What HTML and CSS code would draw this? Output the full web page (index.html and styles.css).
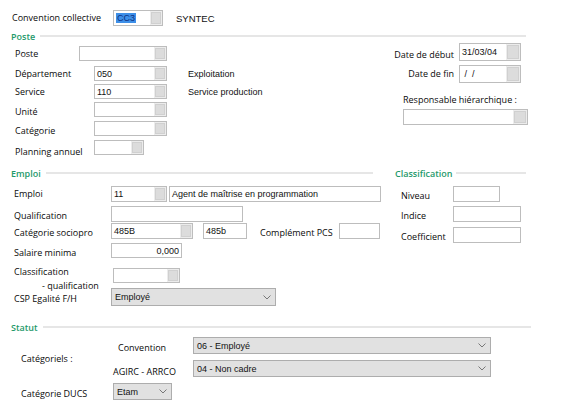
FILE: index.html
```html
<!DOCTYPE html>
<html lang="fr">
<head>
<meta charset="utf-8">
<title>Fiche salarié</title>
<link rel="stylesheet" href="styles.css">
</head>
<body>
<div class="page">

  <div class="row top-row">
    <span class="lbl top-lbl">Convention collective</span>
    <div class="field w-cc"><span class="v"><span class="hl">CC3</span></span><span class="btn"></span></div>
    <span class="val top-val">SYNTEC</span>
  </div>

  <div class="sec-head head-poste"><span class="sec-title">Poste</span><span class="sec-line"></span></div>

  <div class="poste">
    <div class="poste-left">
      <div class="row r-poste"><span class="lbl l-poste">Poste</span><div class="field w-poste"><span class="v"></span><span class="btn"></span></div></div>
      <div class="row r-dept"><span class="lbl l-std">Département</span><div class="field w-std"><span class="v">050</span><span class="btn"></span></div><span class="val desc">Exploitation</span></div>
      <div class="row r-serv"><span class="lbl l-std">Service</span><div class="field w-std"><span class="v">110</span><span class="btn"></span></div><span class="val desc">Service production</span></div>
      <div class="row r-unit"><span class="lbl l-std low">Unité</span><div class="field w-std"><span class="v"></span><span class="btn"></span></div></div>
      <div class="row r-cat"><span class="lbl l-std low">Catégorie</span><div class="field w-std"><span class="v"></span><span class="btn"></span></div></div>
      <div class="row r-plan"><span class="lbl l-std lower">Planning annuel</span><div class="field w-plan"><span class="v"></span><span class="btn"></span></div></div>
    </div>
    <div class="poste-right">
      <div class="row date-row d-debut"><span class="lbl mid">Date de début</span><div class="field w-date"><span class="v">31/03/04</span><span class="btn"></span></div></div>
      <div class="row date-row d-fin"><span class="lbl">Date de fin</span><div class="field w-date"><span class="v">&nbsp;/&nbsp;&nbsp;/</span><span class="btn"></span></div></div>
      <div class="lbl resp-lbl">Responsable hiérarchique :</div>
      <div class="field w-resp"><span class="v"></span><span class="btn"></span></div>
    </div>
  </div>

  <div class="emploi">
    <div class="emploi-left">
      <div class="sec-head head-emploi"><span class="sec-title">Emploi</span><span class="sec-line"></span></div>
      <div class="row e-emploi"><span class="lbl l-emp">Emploi</span><div class="field w-emp"><span class="v">11</span><span class="btn"></span></div><div class="field w-lib"><span class="v">Agent de maîtrise en programmation</span></div></div>
      <div class="row e-qual"><span class="lbl l-emp low">Qualification</span><div class="field w-qual"><span class="v"></span></div></div>
      <div class="row e-csp"><span class="lbl l-emp low">Catégorie sociopro</span><div class="field w-csp"><span class="v">485B</span><span class="btn"></span></div><div class="field w-pcs"><span class="v">485b</span></div><span class="lbl l-pcs low">Complément PCS</span><div class="field w-comp"><span class="v"></span></div></div>
      <div class="row e-sal"><span class="lbl l-emp low">Salaire minima</span><div class="field w-sal"><span class="v v-right">0,000</span></div></div>
      <div class="row e-cq"><span class="lbl l-cq low">Classification<br><span class="cq-sub">- qualification</span></span><div class="field w-cq"><span class="v"></span><span class="btn"></span></div></div>
      <div class="row e-egal"><span class="lbl l-emp low">CSP Egalité F/H</span><div class="select w-egal"><span class="s-text">Employé</span><svg class="chev" width="8" height="5" viewBox="0 0 8 5"><path d="M0.5 0.5 L4 4 L7.5 0.5" fill="none" stroke="#777" stroke-width="1"/></svg></div></div>
    </div>
    <div class="emploi-right">
      <div class="sec-head head-class"><span class="sec-title">Classification</span><span class="sec-line"></span></div>
      <div class="row c-niv"><span class="lbl l-cls low">Niveau</span><div class="field w-niv"><span class="v"></span></div></div>
      <div class="row c-ind"><span class="lbl l-cls low">Indice</span><div class="field w-ind"><span class="v"></span></div></div>
      <div class="row c-coef"><span class="lbl l-cls low">Coefficient</span><div class="field w-ind"><span class="v"></span></div></div>
    </div>
  </div>

  <div class="sec-head head-statut"><span class="sec-title">Statut</span><span class="sec-line"></span></div>

  <div class="statut">
    <span class="lbl st-cat low">Catégoriels :</span>
    <span class="lbl st-conv low">Convention</span>
    <div class="select st-sel1"><span class="s-text">06 - Employé</span><svg class="chev" width="8" height="5" viewBox="0 0 8 5"><path d="M0.5 0.5 L4 4 L7.5 0.5" fill="none" stroke="#777" stroke-width="1"/></svg></div>
    <span class="lbl st-agirc mid">AGIRC - ARRCO</span>
    <div class="select st-sel2"><span class="s-text">04 - Non cadre</span><svg class="chev" width="8" height="5" viewBox="0 0 8 5"><path d="M0.5 0.5 L4 4 L7.5 0.5" fill="none" stroke="#777" stroke-width="1"/></svg></div>
    <span class="lbl st-ducs low">Catégorie DUCS</span>
    <div class="select st-sel3"><span class="s-text">Etam</span><svg class="chev" width="8" height="5" viewBox="0 0 8 5"><path d="M0.5 0.5 L4 4 L7.5 0.5" fill="none" stroke="#777" stroke-width="1"/></svg></div>
  </div>

</div>
</body>
</html>
```

FILE: styles.css
```css
html, body {
  margin: 0;
  padding: 0;
  background: #ffffff;
}

body {
  font-family: "Open Sans", "Noto Sans", sans-serif;
  font-size: 9px;
  color: #0a0a0a;
}

.page {
  width: 576px;
  height: 411px;
  overflow: hidden;
  box-sizing: border-box;
  padding-top: 10px;
}

.row {
  display: flex;
  align-items: center;
}

.lbl {
  font-family: "Open Sans", "Noto Sans", sans-serif;
  font-size: 9px;
  line-height: 12px;
  white-space: nowrap;
  color: #0a0a0a;
}

/* baseline nudges that do not change the row height */
.low { margin-top: 2px; margin-bottom: -2px; }
.mid { margin-top: 3px; margin-bottom: -3px; }
.lower { margin-top: 4px; margin-bottom: -4px; }

.val {
  font-family: "Liberation Sans", Arial, sans-serif;
  font-size: 9px;
  color: #111111;
  white-space: nowrap;
}

/* input fields */
.field {
  display: flex;
  box-sizing: border-box;
  height: 16px;
  border: 1px solid #bdbdbd;
  background: #ffffff;
  flex: none;
}

.field .v {
  flex: 1;
  min-width: 0;
  font-family: "Liberation Sans", Arial, sans-serif;
  font-size: 9px;
  line-height: 14px;
  color: #111111;
  padding-left: 2px;
  white-space: nowrap;
  overflow: hidden;
}

.field .v-right {
  text-align: right;
  padding-left: 0;
  padding-right: 2px;
}

.field .btn {
  width: 12px;
  flex: none;
  box-sizing: border-box;
  background: #dcdcdc;
  border: 1px solid #ececec;
  box-shadow: inset 0 0 0 1px #d0d0d0;
}

.hl {
  background: #3d8fe8;
  color: #0d2f80;
  padding: 0 1px;
}

/* selects */
.select {
  display: flex;
  align-items: center;
  box-sizing: border-box;
  height: 17px;
  border: 1px solid #adadad;
  background: #e1e1e1;
  padding: 0 4px 0 3px;
}

.select .s-text {
  flex: 1;
  font-family: "Liberation Sans", Arial, sans-serif;
  font-size: 9px;
  color: #111111;
  white-space: nowrap;
}

.chev {
  flex: none;
  display: block;
}

/* section heads */
.sec-head {
  display: flex;
  align-items: center;
  height: 12px;
}

.sec-title {
  font-family: "Open Sans", "Noto Sans", sans-serif;
  font-size: 9px;
  font-weight: 600;
  line-height: 12px;
  color: #1f9a6b;
  white-space: nowrap;
}

.sec-line {
  flex: 1;
  height: 2px;
  background: #e6e6e6;
  margin-left: 5px;
  margin-top: -2px;
}

/* top row */
.top-row {
  height: 16px;
}

.top-lbl {
  width: 101px;
  padding-left: 12px;
  flex: none;
}

.w-cc { width: 50px; }

.top-val {
  margin-left: 13px;
  font-size: 9.5px;
}

.head-poste {
  margin-top: 5px;
  padding-left: 11px;
  width: 515px;
}

/* poste */
.poste {
  display: flex;
}

.poste-left {
  width: 392px;
  padding-left: 15px;
  box-sizing: border-box;
}

.l-poste { width: 64px; flex: none; }
.l-std { width: 79px; flex: none; }

.w-poste { width: 88px; height: 15px; }
.w-std { width: 73px; height: 15px; }
.w-plan { width: 50px; height: 15px; }

.desc { margin-left: 21px; }

.r-poste { margin-top: 3px; }
.r-dept { margin-top: 5px; }
.r-serv { margin-top: 3px; }
.r-unit { margin-top: 3px; }
.r-cat { margin-top: 4px; }
.r-plan { margin-top: 4px; }

.poste-right {
  width: 136px;
  display: flex;
  flex-direction: column;
}

.date-row {
  justify-content: flex-end;
  padding-right: 7px;
}

.date-row .lbl { margin-right: 5px; }

.w-date { width: 62px; height: 18px; }
.w-date .v { line-height: 16px; }
.w-date .btn { width: 14px; }

.d-debut { margin-top: 0; }
.d-fin { margin-top: 4px; }

.resp-lbl {
  margin-top: 11px;
  padding-left: 11px;
}

.w-resp {
  margin-top: 3px;
  margin-left: 11px;
  width: 125px;
}

.w-resp .btn { width: 14px; }

/* emploi */
.emploi {
  display: flex;
  margin-top: 13px;
}

.emploi-left {
  width: 383px;
  flex: none;
}

.head-emploi {
  padding-left: 11px;
  margin-right: 10px;
}

.emploi-left .row {
  padding-left: 14px;
}

.l-emp { width: 97px; flex: none; }

.e-emploi { margin-top: 6px; }
.e-qual { margin-top: 4px; }
.e-csp { margin-top: 1px; }
.e-sal { margin-top: 4px; }

.w-emp { width: 56px; }
.w-lib { width: 212px; margin-left: 2px; }
.w-qual { width: 132px; }
.w-csp { width: 82px; }
.w-pcs { width: 44px; margin-left: 10px; }
.l-pcs { width: 79px; flex: none; margin-left: 13px; }
.w-comp { width: 41px; }
.w-sal { width: 71px; height: 15px; }

.e-cq {
  margin-top: 5px;
  align-items: flex-start;
  height: 25px;
}

.l-cq {
  width: 99px;
  flex: none;
  line-height: 14px;
}

.cq-sub {
  padding-left: 28px;
}

.w-cq {
  width: 67px;
  height: 15px;
  margin-top: 5px;
}

.e-egal { margin-top: 0; }

.w-egal { width: 165px; height: 18px; }

.emploi-right {
  width: 131px;
  margin-left: 12px;
  flex: none;
}

.head-class .sec-line { margin-left: 4px; }

.emploi-right .row {
  padding-left: 6px;
}

.l-cls { width: 52px; flex: none; }

.c-niv { margin-top: 6px; }
.c-ind { margin-top: 4px; }
.c-coef { margin-top: 5px; }

.w-niv { width: 47px; }
.w-ind { width: 68px; }

/* statut */
.head-statut {
  margin-top: 16px;
  padding-left: 11px;
  width: 520px;
}

.statut {
  display: grid;
  grid-template-columns: 92px 80px 298px;
  grid-template-rows: 17px 17px 17px;
  row-gap: 6px;
  padding-left: 21px;
  margin-top: 3px;
  align-items: center;
}

.st-cat {
  grid-column: 1;
  grid-row: 1 / span 2;
}

.st-conv {
  grid-column: 2;
  grid-row: 1;
  padding-left: 5px;
}

.st-sel1 { grid-column: 3; grid-row: 1; }

.st-agirc {
  grid-column: 2;
  grid-row: 2;
}

.st-sel2 { grid-column: 3; grid-row: 2; }

.st-ducs {
  grid-column: 1;
  grid-row: 3;
}

.st-sel3 {
  grid-column: 2;
  grid-row: 3;
  width: 59px;
}
```
